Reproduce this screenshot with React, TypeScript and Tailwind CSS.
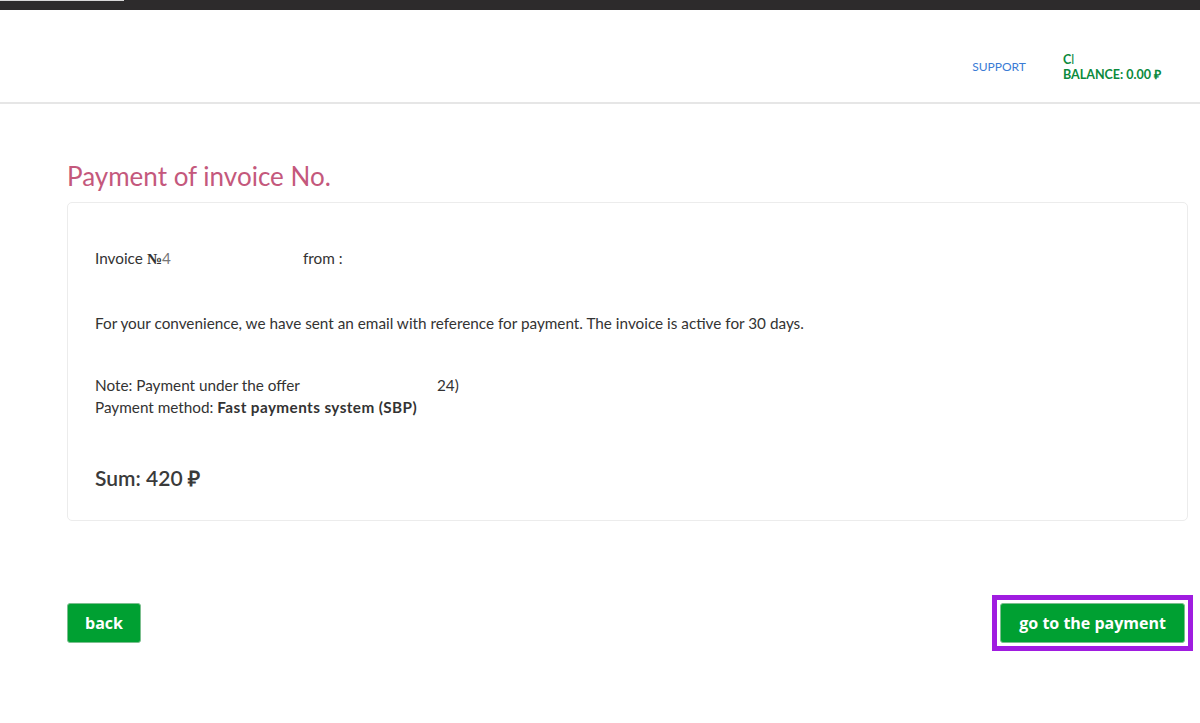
import React from 'react';

export default function App() {
  return (
    <div className="min-h-[723px] bg-white font-['Lato',sans-serif] text-[#333]">
      {/* top strip */}
      <div className="h-[10px] bg-[#2d2b2c]">
        <div className="h-px w-[124px] bg-[#d8d8d8]" />
      </div>

      {/* header */}
      <header className="flex h-[94px] items-start justify-end border-b-2 border-[#e6e6e6] pr-[39px] pt-[42px]">
        <a href="#" className="mr-[37px] mt-[8px] text-[12px] leading-[14px] text-[#3a7bd5]">
          SUPPORT
        </a>
        <div className="flex flex-col text-[12.5px] font-bold leading-[15px] text-[#0a8a3c]">
          <span>C<span className="font-normal">l</span></span>
          <span>BALANCE: 0.00 ₽</span>
        </div>
      </header>

      <main className="ml-[67px] mr-[12px]">
        <h1 className="mt-[57px] text-[26px] leading-[30px] text-[#c4587c]">Payment of invoice No.</h1>

        <div className="mt-[11px] rounded-[5px] border border-[#ececec] px-[27px] pb-[28px] pt-[45px] text-[15.3px]">
          <p className="flex leading-[20px]">
            <span className="w-[208px]">
              Invoice <span className="font-['Liberation_Serif',serif] font-bold">№</span>
              <span className="text-[#777]">4</span>
            </span>
            <span>from :</span>
          </p>

          <p className="mt-[44px] leading-[20px]">
            For your convenience, we have sent an email with reference for payment. The invoice is active for 30 days.
          </p>

          <div className="mt-[41px] leading-[22px]">
            <p className="flex">
              <span className="w-[342px]">Note: Payment under the offer</span>
              <span>24)</span>
            </p>
            <p>
              Payment method: <span className="font-bold tracking-[0.4px]">Fast payments system (SBP)</span>
            </p>
          </div>

          <p className="mt-[46px] text-[21px] font-semibold leading-[28px] text-[#3a3a3a]">Sum: 420 ₽</p>
        </div>

        <div className="mt-[82px] flex items-center justify-between">
          <button className="h-[40px] rounded-[3px] border border-[#7cbf8f] bg-[#00a032] px-[17px] font-['Open_Sans',sans-serif] text-[16px] font-bold text-white">
            back
          </button>
          <span className="-my-[8px] -mr-[5px] border-[5px] border-[#a01ce0] p-[3px]">
            <button className="block h-[40px] rounded-[3px] border border-[#7cbf8f] bg-[#00a032] px-[18px] font-['Open_Sans',sans-serif] text-[16px] font-bold text-white">
              go to the payment
            </button>
          </span>
        </div>
      </main>
    </div>
  );
}
